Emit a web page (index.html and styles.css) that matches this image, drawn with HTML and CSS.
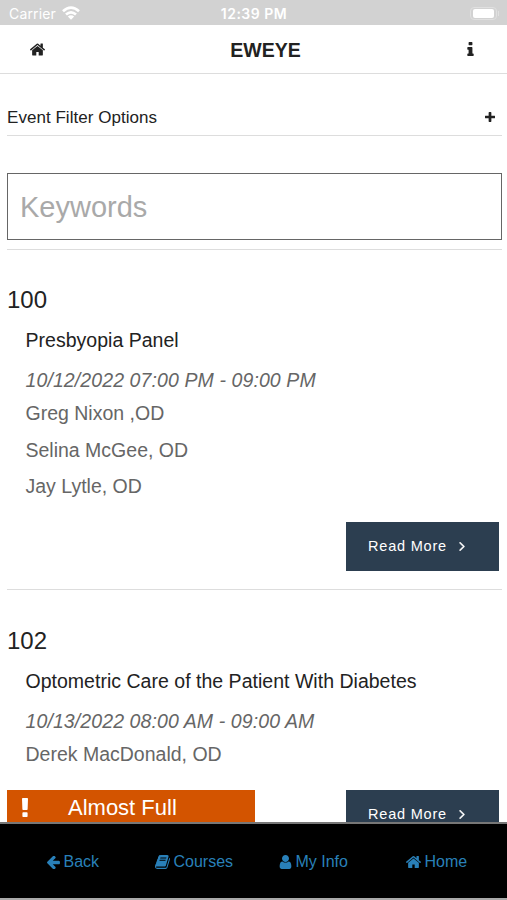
FILE: index.html
```html
<!DOCTYPE html>
<html lang="en">
<head>
<meta charset="utf-8">
<title>EWEYE</title>
<link rel="stylesheet" href="styles.css">
</head>
<body>
<svg class="defs" aria-hidden="true">
<symbol id="home" viewBox="90 253 1612 1283"><path d="M1472 992v480q0 26-19 45t-45 19h-384v-384h-256v384h-384q-26 0-45-19t-19-45v-480q0-1 .5-3t.5-3l575-474 575 474q1 2 1 6zm223-69l-62 74q-8 9-21 11h-3q-13 0-21-7l-692-577-692 577q-12 8-24 7-13-2-21-11l-62-74q-8-10-7-23.5t11-21.5l719-599q32-26 76-26t76 26l244 204v-195q0-14 9-23t23-9h192q14 0 23 9t9 23v408l219 182q10 8 11 21.5t-7 23.5z"/></symbol>
<symbol id="info" viewBox="576 128 640 1408"><path d="M1216 1344v128q0 26-19 45t-45 19h-512q-26 0-45-19t-19-45v-128q0-26 19-45t45-19h64v-384h-64q-26 0-45-19t-19-45v-128q0-26 19-45t45-19h384q26 0 45 19t19 45v576h64q26 0 45 19t19 45zm-128-1152v192q0 26-19 45t-45 19h-256q-26 0-45-19t-19-45v-192q0-26 19-45t45-19h256q26 0 45 19t19 45z"/></symbol>
<symbol id="plus" viewBox="192 128 1408 1408"><path d="M1600 736v192q0 40-28 68t-68 28h-416v416q0 40-28 68t-68 28h-192q-40 0-68-28t-28-68v-416h-416q-40 0-68-28t-28-68v-192q0-40 28-68t68-28h416v-416q0-40 28-68t68-28h192q40 0 68 28t28 68v416h416q40 0 68 28t28 68z"/></symbol>
<symbol id="angle" viewBox="589 451 582 1018"><path d="M1171 960q0 13-10 23l-466 466q-10 10-23 10t-23-10l-50-50q-10-10-10-23t10-23l393-393-393-393q-10-10-10-23t10-23l50-50q10-10 23-10t23 10l466 466q10 10 10 23z"/></symbol>
<symbol id="bang" viewBox="673 128 446 1408"><path d="M1088 1248v224q0 26-19 45t-45 19h-256q-26 0-45-19t-19-45v-224q0-26 19-45t45-19h256q26 0 45 19t19 45zm30-1056l-28 768q-1 26-20.5 45t-45.5 19h-256q-26 0-45.5-19t-20.5-45l-28-768q-1-26 17.5-45t44.5-19h320q26 0 44.5 19t17.5 45z"/></symbol>
<symbol id="arrow" viewBox="192 279 1472 1482"><path d="M1664 960v128q0 53-32.500 90.500t-84.500 37.500h-704l293 294q38 36 38 90t-38 90l-75 76q-37 37-90 37-52 0-91-37l-651-652q-37-37-37-90 0-52 37-91l651-650q38-38 91-38 52 0 90 38l75 74q38 38 38 91t-38 91l-293 293h704q52 0 84.500 37.500t32.500 90.500z"/></symbol>
<symbol id="book" viewBox="64 128 1665 1536"><path d="M1703 478q40 57 18 129l-275 906q-19 64-76.5 107.500t-122.500 43.500h-923q-77 0-148.500-53.500t-99.500-131.500q-24-67-2-127 0-4 3-27t4-37q1-8-3-21.500t-3-19.500q2-11 8-21t16.500-23.500 16.500-23.500q23-38 45-91.500t30-91.500q3-10 .5-30t-.5-28q3-11 17-28t17-23q21-36 42-92t25-90q1-9-2.500-32t.5-28q4-13 22-30.500t22-22.500q19-26 42.500-84.500t27.500-96.500q1-8-3-25.500t-2-26.500q2-8 9-18t18-23 17-21q8-12 16.500-30.500t15-35 16-36 19.500-32 26.500-23.500 36-11.500 47.500 5.500l-1 3q38-9 51-9h761q74 0 114 56t18 130l-274 906q-36 119-71.500 153.500t-128.500 34.500h-869q-27 0-38 15-11 16-1 43 24 70 144 70h923q29 0 56-15.500t35-41.500l300-987q7-22 5-57 38 15 59 43zm-1064 2q-4 13 2 22.500t20 9.500h608q13 0 25.500-9.500t16.500-22.500l21-64q4-13-2-22.500t-20-9.500h-608q-13 0-25.500 9.500t-16.500 22.500zm-83 256q-4 13 2 22.500t20 9.500h608q13 0 25.500-9.500t16.500-22.500l21-64q4-13-2-22.500t-20-9.500h-608q-13 0-25.500 9.500t-16.500 22.500z"/></symbol>
<symbol id="user" viewBox="256 128 1280 1536"><path d="M1536 1399q0 109-62.500 187t-150.500 78h-854q-88 0-150.500-78t-62.500-187q0-85 8.500-160.500t31.500-152 58.500-131 94-89 134.500-34.500q131 128 313 128t313-128q76 0 134.500 34.500t94 89 58.500 131 31.500 152 8.500 160.500zm-256-887q0 159-112.500 271.500t-271.500 112.500-271.500-112.500-112.500-271.500 112.500-271.500 271.500-112.500 271.500 112.500 112.500 271.500z"/></symbol>
</svg>
<div class="app">
  <div class="status">
    <div class="carrier"><span>Carrier</span><svg class="wifi" viewBox="0 0 18 14"><g fill="none" stroke="#fff" stroke-width="2.700"><path d="M1 5.200Q9-2 17 5.200"/><path d="M4 8.600Q9 4.200 14 8.600"/></g><path fill="#fff" d="M5.800 10.500Q9 7.800 12.200 10.500L9 13.800z"/></svg></div>
    <span class="time">12:39 PM</span>
    <div class="battery"><i class="shell"><b class="charge"></b></i><i class="cap"></i></div>
  </div>
  <header class="bar">
    <svg class="bar-home"><use href="#home"/></svg>
    <h1 class="title">EWEYE</h1>
    <svg class="bar-info"><use href="#info"/></svg>
  </header>
  <main class="content">
    <div class="filter"><span class="filter-label">Event Filter Options</span><svg class="plus"><use href="#plus"/></svg></div>
    <div class="search"><input class="keywords" type="text" placeholder="Keywords"></div>
    <section class="event first">
      <h2 class="number">100</h2>
      <h3 class="name">Presbyopia Panel</h3>
      <p class="when">10/12/2022 07:00 PM - 09:00 PM</p>
      <p class="who">Greg Nixon ,OD</p>
      <p class="who">Selina McGee, OD</p>
      <p class="who">Jay Lytle, OD</p>
      <div class="actions"><a class="more"><span>Read More</span><svg class="angle"><use href="#angle"/></svg></a></div>
    </section>
    <section class="event">
      <h2 class="number">102</h2>
      <h3 class="name">Optometric Care of the Patient With Diabetes</h3>
      <p class="when">10/13/2022 08:00 AM - 09:00 AM</p>
      <p class="who">Derek MacDonald, OD</p>
      <div class="actions"><div class="almost"><svg class="bang"><use href="#bang"/></svg><span>Almost Full</span></div><a class="more"><span>Read More</span><svg class="angle"><use href="#angle"/></svg></a></div>
    </section>
  </main>
  <nav class="tabs">
    <a class="tab back"><svg class="i-arrow"><use href="#arrow"/></svg><span>Back</span></a>
    <a class="tab"><svg class="i-book"><use href="#book"/></svg><span>Courses</span></a>
    <a class="tab"><svg class="i-user"><use href="#user"/></svg><span>My Info</span></a>
    <a class="tab"><svg class="i-home"><use href="#home"/></svg><span>Home</span></a>
  </nav>
</div>
</body>
</html>
```
FILE: styles.css
```css
* { box-sizing: border-box; }
body { margin: 0; background: #fff; color: #222; font-family: "Liberation Sans", Arial, sans-serif; }
h1, h2, h3, p { margin: 0; font-weight: 400; white-space: nowrap; }
svg { display: block; fill: currentColor; flex: none; }
.defs { display: none; }
.app { height: 900px; display: flex; flex-direction: column; overflow: hidden; }
.status { height: 25px; flex: none; padding: 2px 8px 0 9px; background: #d2d2d2; color: #fff; display: grid; grid-template-columns: 1fr auto 1fr; align-items: center; font: 14px/20px Inter, sans-serif; }
.carrier { display: flex; align-items: center; gap: 6px; letter-spacing: .15px; }
.wifi { width: 18px; height: 14px; margin-top: -2px; }
.time { font-weight: 600; font-size: 14px; letter-spacing: .5px; }
.battery { justify-self: end; display: flex; align-items: center; gap: 1px; }
.shell { width: 27px; height: 13px; padding: 1px 2px; border: 1px solid #e0e0e0; border-radius: 4px; }
.charge { display: block; height: 100%; background: #fff; border-radius: 2px; }
.cap { width: 1px; height: 5px; background: #e0e0e0; }
.bar { height: 49px; flex: none; border-bottom: 1px solid #ddd; padding: 0 33px 0 30px; display: flex; justify-content: space-between; align-items: center; }
.bar-home { width: 15px; height: 13px; margin-top: 1px; }
.title { font-size: 19.5px; font-weight: 700; line-height: 24px; padding-top: 2px; margin-left: 19px; }
.bar-info { width: 7px; height: 14px; }
.content { flex: 1; min-height: 0; overflow: hidden; padding: 26px 5px 0 7px; }
.filter { height: 36px; border-bottom: 1px solid #ddd; display: flex; align-items: center; justify-content: space-between; padding: 0 7px 0 0; font-size: 17px; letter-spacing: .04px; }
.plus { width: 10px; height: 10px; margin-top: -1px; }
.search { height: 114px; padding-top: 37px; border-bottom: 1px solid #ddd; }
.keywords { display: block; width: 100%; height: 67px; border: 1px solid #666; border-radius: 0; padding: 2px 12px 0; background: #fff; font: 29px "Liberation Sans", Arial, sans-serif; outline: 0; }
.keywords::placeholder { color: #a9a9a9; opacity: 1; }
.event { height: 341px; padding-top: 35px; border-bottom: 1px solid #ddd; }
.event.first { height: 340px; padding-top: 34px; }
.number { font-size: 24px; line-height: 32px; }
.name { font-size: 19.5px; line-height: 24px; height: 29px; padding-top: 1px; margin: 11px 0 0 18.5px; letter-spacing: .02px; }
.when { margin: 0 0 0 18.5px; padding-top: 12px; height: 45px; font-size: 19.5px; line-height: 24px; font-style: italic; letter-spacing: .1px; color: #666; }
.who { margin-left: 18.5px; height: 36.6px; line-height: 24px; font-size: 19.5px; color: #666; }
.actions { display: flex; margin: 11px 3px 0 0; }
.more { margin-left: auto; width: 153px; height: 49px; background: #2c3e50; color: #fff; display: flex; align-items: center; padding-left: 22px; gap: 12px; font-size: 14.5px; letter-spacing: .8px; }
.angle { width: 6px; height: 9px; stroke: currentColor; stroke-width: 60px; }
.almost { width: 248px; height: 36px; background: #d35400; color: #fff; display: flex; align-items: center; padding-left: 14px; gap: 39px; font-size: 22px; padding-top: 1px; }
.bang { width: 8px; height: 19px; margin-top: -2px; }
.tabs { height: 78px; flex: none; background: #000; color: #2980b9; border-top: 2px solid #777; border-bottom: 2px solid #aaa; display: grid; grid-template-columns: 155px 124px 127px 1fr; font-size: 16px; align-items: center; padding-top: 2px; }
.tab { display: flex; align-items: center; gap: 3.5px; }
.back { padding-left: 47px; }
.i-arrow { width: 13px; height: 13px; }
.i-book { width: 15px; height: 14px; }
.i-user { width: 13px; height: 14px; }
.i-home { width: 15px; height: 12px; }
```
